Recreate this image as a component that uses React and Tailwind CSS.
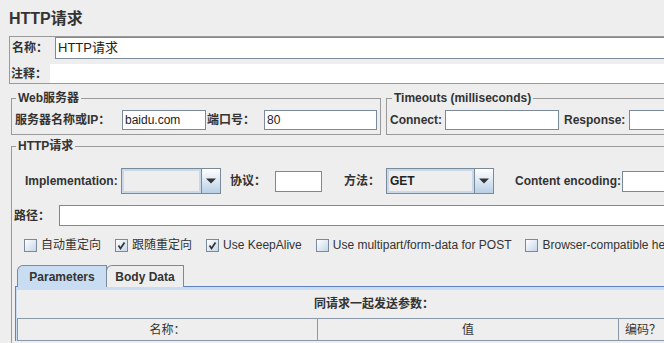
import React from 'react';

const Field = ({ className = '', children }) => (
    <div className={`flex items-center border border-[#7a8a99] bg-white pl-[2px] font-normal text-[#222] ${className}`}>
        {children}
    </div>
);

const Combo = ({ className = '', value }) => (
    <div className={`flex h-[26px] border border-[#7a8a99] bg-[#eeeeee] ${className}`}>
        <div className="flex flex-1 items-center border-2 border-[#c9d9ea] pl-[1px] font-bold text-[#222]">{value}</div>
        <div className="flex w-[19px] items-center justify-center border-l border-[#7a8a99] bg-linear-to-b from-white to-[#b8cfe5]">
            <svg width="10" height="6" viewBox="0 0 10 6">
                <path d="M0 0.5h10L5 5.5z" fill="#333" />
            </svg>
        </div>
    </div>
);

const Check = ({ checked, label }) => (
    <div className="flex items-center gap-[4px]">
        <div className="flex h-[13px] w-[13px] items-center justify-center border border-[#7a8a99] bg-linear-to-br from-white to-[#c5d6ea]">
            {checked && (
                <svg width="9" height="9" viewBox="0 0 9 9">
                    <path d="M1.5 4.5 L3.5 7.5 L7.5 1.5" stroke="#333" strokeWidth="1.7" fill="none" />
                </svg>
            )}
        </div>
        <span className="font-normal">{label}</span>
    </div>
);

export default function App() {
    return (
        <div className="h-[343px] w-[664px] overflow-hidden bg-[#eeeeee] font-['Liberation_Sans','Noto_Sans_CJK_SC',sans-serif] text-[12px] font-bold leading-[14px] text-[#333]">
            <div className="w-[760px]">
                <div className="h-[36px] pl-[9px] pt-[8px] text-[16px] leading-[22px]">HTTP请求</div>

                {/* name / comment */}
                <div className="ml-[9px] flex h-[48px] flex-col border border-[#9a9a9a]">
                    <div className="flex h-[22px] items-center">
                        <span className="w-[45px] pl-[2px]">名称：</span>
                        <div className="flex h-[22px] flex-1 items-center border border-[#7a8a99] bg-white pl-[2px] text-[13px] font-normal text-[#222]">HTTP请求</div>
                    </div>
                    <div className="mt-[5px] flex h-[19px] items-center">
                        <span className="w-[40px] pl-[1px]">注释：</span>
                        <div className="h-[19px] flex-1 bg-white" />
                    </div>
                </div>

                {/* web server + timeouts */}
                <div className="mt-[7px] flex">
                    <fieldset className="w-[370px] ml-[11px] border border-[#9a9a9a] pb-[4px] pl-[3px]">
                        <legend className="ml-[1px] px-[2px] leading-[14px]">Web服务器</legend>
                        <div className="mt-[5px] flex items-center">
                            <span className="w-[107px]">服务器名称或IP：</span>
                            <Field className="h-[20px] w-[84px]">baidu.com</Field>
                            <span className="ml-[1px] w-[57px]">端口号：</span>
                            <Field className="h-[20px] w-[113px]">80</Field>
                        </div>
                    </fieldset>
                    <fieldset className="ml-[5px] flex-1 border border-[#9a9a9a] pb-[4px] pl-[3px]">
                        <legend className="ml-[2px] px-[2px] leading-[14px]">Timeouts (milliseconds)</legend>
                        <div className="mt-[5px] flex items-center">
                            <span className="w-[55px]">Connect:</span>
                            <Field className="h-[20px] w-[114px]" />
                            <span className="ml-[5px] w-[65px]">Response:</span>
                            <Field className="h-[20px] flex-1" />
                        </div>
                    </fieldset>
                </div>

                {/* http request */}
                <fieldset className="ml-[11px] mt-[4px] h-[220px] border border-[#9a9a9a] pl-[3px]">
                    <legend className="ml-[1px] px-[2px] leading-[14px]">HTTP请求</legend>
                    <div className="mt-[15px] flex h-[26px] items-center">
                        <span className="ml-[10px] w-[96px]">Implementation:</span>
                        <Combo className="w-[100px]" value="" />
                        <span className="ml-[9px] w-[45px]">协议：</span>
                        <Field className="h-[21px] w-[47px]" />
                        <span className="ml-[22px] w-[42px]">方法：</span>
                        <Combo className="w-[108px]" value="GET" />
                        <span className="ml-[21px] w-[107px]">Content encoding:</span>
                        <Field className="h-[21px] flex-1" />
                    </div>
                    <div className="mt-[11px] flex h-[21px] items-center">
                        <span className="-ml-[1px] w-[45px]">路径：</span>
                        <Field className="h-[21px] flex-1" />
                    </div>
                    <div className="ml-[9px] mt-[11px] flex h-[16px] items-center gap-[14px]">
                        <Check label="自动重定向" />
                        <Check checked label="跟随重定向" />
                        <Check checked label="Use KeepAlive" />
                        <Check label="Use multipart/form-data for POST" />
                        <Check label="Browser-compatible headers" />
                    </div>

                    {/* tabs */}
                    <div className="mt-[12px] w-[716px]">
                        <div className="flex h-[22px] pl-[2px]">
                            <div className="relative z-10 flex h-[22px] w-[90px] items-center justify-center rounded-tl-[6px] border border-b-0 border-[#7a8a99] bg-[#c8ddf2]">
                                Parameters
                            </div>
                            <div className="-ml-px flex h-[22px] w-[78px] items-center justify-center rounded-tl-[6px] border border-b-0 border-[#7a8a99] bg-[#eeeeee]">
                                Body Data
                            </div>
                        </div>
                        <div className="-mt-px border-l border-t border-[#6382bf]">
                            <div className="border-l border-t-[3px] border-[#c8ddf2]">
                                <div className="flex h-[28px] items-center justify-center">同请求一起发送参数：</div>
                                <div className="flex h-[23px] border-y border-l border-[#8a99a8] bg-[#eeeeee] font-normal">
                                    <div className="flex w-[300px] items-center justify-center border-r border-[#8a99a8]">名称：</div>
                                    <div className="flex w-[301px] items-center justify-center border-r border-[#8a99a8]">值</div>
                                    <div className="flex w-[60px] items-center pl-[6px]">编码？</div>
                                </div>
                            </div>
                        </div>
                    </div>
                </fieldset>
            </div>
        </div>
    );
}
